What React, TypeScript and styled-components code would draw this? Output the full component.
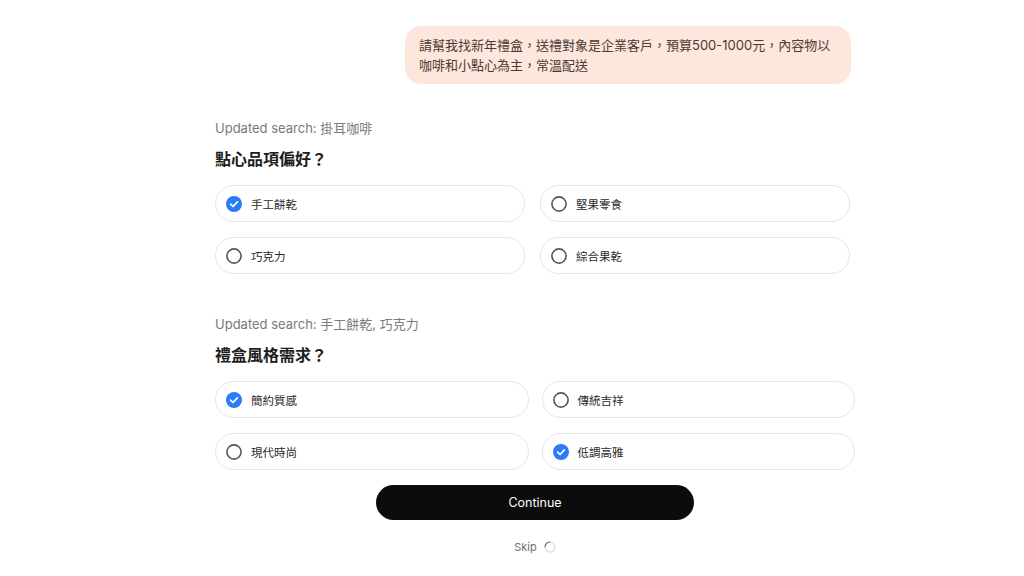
import React from "react";
import styled, { createGlobalStyle } from "styled-components";

const Global = createGlobalStyle`
  html, body { margin: 0; padding: 0; background: #ffffff; }
  body { font-family: "Inter", "Noto Sans CJK TC", sans-serif; -webkit-font-smoothing: antialiased; }
`;

const Page = styled.div`
  width: 1024px;
  min-height: 576px;
  display: flex;
  flex-direction: column;
  padding: 26px 0 0 215px;
  box-sizing: border-box;
`;

const Thread = styled.div`
  width: 640px;
  display: flex;
  flex-direction: column;
`;

const Bubble = styled.div`
  align-self: flex-end;
  margin-right: 4px;
  width: 446px;
  box-sizing: border-box;
  background: #fde6dc;
  border-radius: 16px;
  padding: 9px 14px 9px 14px;
  font-family: "Inter", "Noto Sans CJK TC", sans-serif;
  font-size: 13px;
  line-height: 20px;
  color: #4a3a33;
`;

const Section = styled.div<{ $top: number }>`
  display: flex;
  flex-direction: column;
  margin-top: ${(p) => p.$top}px;
`;

const Updated = styled.div`
  font-size: 13px;
  line-height: 18px;
  color: #7a7a7a;
`;

const Heading = styled.div`
  margin-top: 11px;
  font-size: 16px;
  line-height: 22px;
  font-weight: 700;
  color: #1d1d1d;
`;

const Grid = styled.div<{ $width: number; $gap: number }>`
  margin-top: 15px;
  width: ${(p) => p.$width}px;
  display: grid;
  grid-template-columns: 1fr 1fr;
  column-gap: ${(p) => p.$gap}px;
  row-gap: 15px;
`;

const Option = styled.div`
  height: 37px;
  box-sizing: border-box;
  border: 1px solid #e6e6e6;
  border-radius: 19px;
  display: flex;
  align-items: center;
  gap: 9px;
  padding-left: 10px;
  font-size: 11.5px;
  color: #2a2a2a;
`;

const Actions = styled.div`
  margin-top: 15px;
  display: flex;
  flex-direction: column;
  align-items: center;
`;

const ContinueButton = styled.button`
  width: 318px;
  height: 35px;
  border: none;
  border-radius: 18px;
  background: #0c0c0c;
  color: #ffffff;
  font-family: "Inter", sans-serif;
  font-size: 12.5px;
  font-weight: 400;
  cursor: pointer;
`;

const SkipRow = styled.div`
  margin-top: 19px;
  display: flex;
  align-items: center;
  gap: 7px;
  font-size: 11px;
  line-height: 16px;
  color: #6e6e6e;
`;

const Radio: React.FC<{ checked: boolean }> = ({ checked }) =>
  checked ? (
    <svg width="16" height="16" viewBox="0 0 16 16">
      <circle cx="8" cy="8" r="8" fill="#2b7cf6" />
      <path d="M4.6 8.2 L7 10.5 L11.4 5.8" fill="none" stroke="#fff" strokeWidth="1.7" strokeLinecap="round" strokeLinejoin="round" />
    </svg>
  ) : (
    <svg width="16" height="16" viewBox="0 0 16 16">
      <circle cx="8" cy="8" r="7.1" fill="none" stroke="#555" strokeWidth="1.6" />
    </svg>
  );

const Spinner = () => (
  <svg width="12" height="12" viewBox="0 0 12 12">
    <circle cx="6" cy="6" r="5" fill="none" stroke="#dcdcdc" strokeWidth="1.2" />
    <path d="M1 6 A5 5 0 0 1 6 1" fill="none" stroke="#777" strokeWidth="1.2" strokeLinecap="round" />
  </svg>
);

type Opt = { label: string; checked: boolean };

const sections: { top: number; updated: string; heading: string; width: number; gap: number; options: Opt[] }[] = [
  {
    top: 35,
    updated: "Updated search: 掛耳咖啡",
    heading: "點心品項偏好？",
    width: 635,
    gap: 15,
    options: [
      { label: "手工餅乾", checked: true },
      { label: "堅果零食", checked: false },
      { label: "巧克力", checked: false },
      { label: "綜合果乾", checked: false },
    ],
  },
  {
    top: 41,
    updated: "Updated search: 手工餅乾, 巧克力",
    heading: "禮盒風格需求？",
    width: 640,
    gap: 13,
    options: [
      { label: "簡約質感", checked: true },
      { label: "傳統吉祥", checked: false },
      { label: "現代時尚", checked: false },
      { label: "低調高雅", checked: true },
    ],
  },
];

export default function App() {
  return (
    <>
      <Global />
      <Page>
        <Thread>
          <Bubble>
            請幫我找新年禮盒，送禮對象是企業客戶，預算500-1000元，內容物以咖啡和小點心為主，常溫配送
          </Bubble>
          {sections.map((s) => (
            <Section key={s.heading} $top={s.top}>
              <Updated>{s.updated}</Updated>
              <Heading>{s.heading}</Heading>
              <Grid $width={s.width} $gap={s.gap}>
                {s.options.map((o) => (
                  <Option key={o.label}>
                    <Radio checked={o.checked} />
                    <span>{o.label}</span>
                  </Option>
                ))}
              </Grid>
            </Section>
          ))}
          <Actions>
            <ContinueButton>Continue</ContinueButton>
            <SkipRow>
              <span>Skip</span>
              <Spinner />
            </SkipRow>
          </Actions>
        </Thread>
      </Page>
    </>
  );
}
